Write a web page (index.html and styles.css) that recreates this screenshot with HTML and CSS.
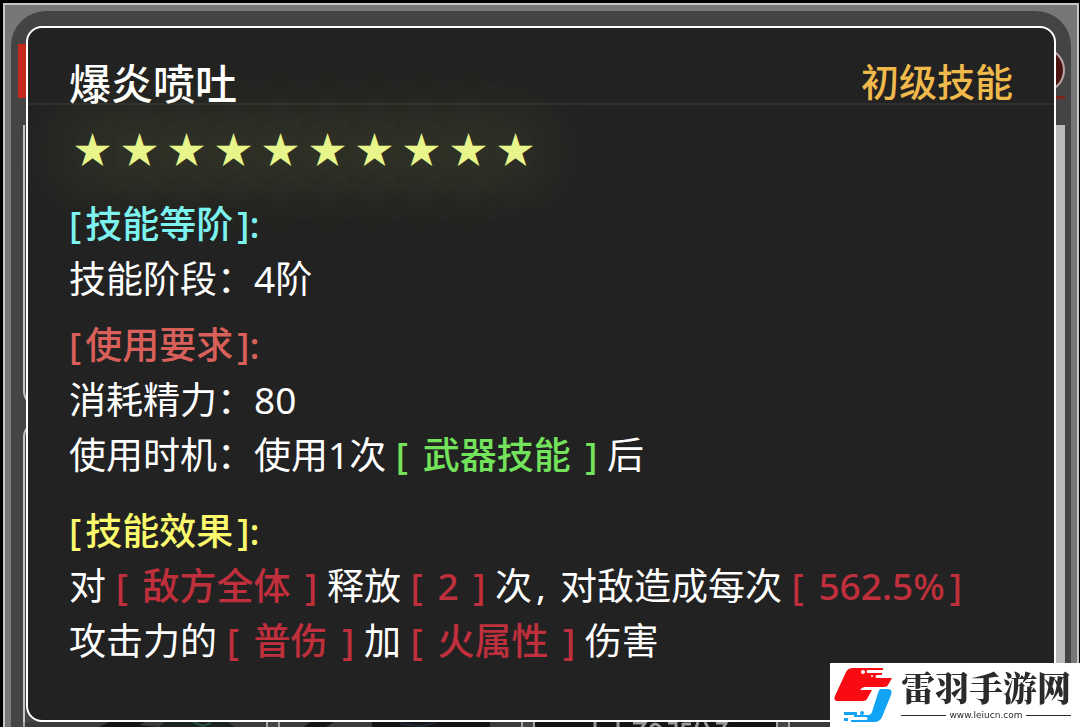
FILE: index.html
```html
<!DOCTYPE html>
<html lang="zh-CN">
<head>
  <meta charset="UTF-8">
  <title>爆炎喷吐</title>
  <link rel="stylesheet" href="styles.css">
</head>
<body>
  <div class="frame">
    <div class="panel">
      <div class="behind">
        <div class="red-tab"></div>
        <div class="close-dot"></div>
        <div class="red-line"></div>
        <div class="list-top"></div>
        <div class="list-bottom"></div>
        <div class="scroll"></div>
      </div>

      <main class="card">
        <header class="head">
          <h1>爆炎喷吐</h1>
          <span class="rank">初级技能</span>
        </header>

        <div class="body">
          <div class="stars">
            <span>★</span><span>★</span><span>★</span><span>★</span><span>★</span><span>★</span><span>★</span><span>★</span><span>★</span><span>★</span>
          </div>

          <section>
            <h2 class="cyan">[<b>技能等阶</b>]:</h2>
            <p>技能阶段：4阶</p>
          </section>

          <section>
            <h2 class="coral">[<b>使用要求</b>]:</h2>
            <p>消耗精力：80</p>
            <p>使用时机：使用1次 <span class="key green">[ <b>武器技能</b> ]</span> 后</p>
          </section>

          <section class="effect">
            <h2 class="yellow">[<b>技能效果</b>]:</h2>
            <p>对 <span class="key red">[ <b>敌方全体</b> ]</span> 释放 <span class="key red">[ <b>2</b> ]</span> 次<span class="comma">,</span>对敌造成每次 <span class="key red">[ <b>562.5%</b>]</span></p>
            <p>攻击力的 <span class="key red">[ <b>普伤</b> ]</span> 加 <span class="key red">[ <b>火属性</b> ]</span> 伤害</p>
          </section>
        </div>
      </main>

      <div class="tiles">
        <div class="tile">
          <svg width="241" height="40" viewBox="0 0 241 40">
            <path d="M84 0h36l-6 3 20 2h-60z" fill="#151515"/>
            <path d="M140 0h62l8 5h-76z" fill="#1b2322"/>
            <path d="M168 0l10 4 8-3" fill="none" stroke="#2b4f45" stroke-width="2"/>
          </svg>
        </div>
        <div class="tile">
          <svg width="241" height="40" viewBox="0 0 241 40">
            <path d="M30 0h24l-8 5h-22zM92 0h118v40H92z" fill="#151517"/>
            <path d="M120 2l20 2 16-3" fill="none" stroke="#1f2833" stroke-width="2"/>
          </svg>
        </div>
        <div class="tile dark">
          <svg width="241" height="40" viewBox="0 0 241 40">
            <g fill="none" stroke="#9a9a9a" stroke-width="3">
              <path d="M60 0v10M83 0v10M98 1h12l-6 9M116 9v-4q4-6 9 0v5M133 1h8v9M148 1v9M148 2h8M163 0l-3 9M170 0l4 8M181 1h10l-5 9"/>
            </g>
          </svg>
        </div>
        <div class="tile"></div>
      </div>
    </div>
  </div>

  <aside class="mark">
    <svg class="logo" width="60" height="56" viewBox="0 0 60 56">
      <path d="M19 1H49V3H34a1 1 0 0 0 0 3h14v2h-5a1 1 0 0 0 0 3H58l-4 7q-1 2-4 2H31q-3 0-5 3h12l-5 9q-1 2-4 2H4q-5 0-3-5L12 5q2-4 7-4z" fill="#f80b12"/>
      <circle cx="29" cy="5" r="2" fill="#fff"/>
      <circle cx="38" cy="9" r="1" fill="#fff"/>
      <path d="M47 22h7q5 0 3 6l-9 22q-2 5-8 5H17v-2h15a1 1 0 0 0 0-3H20v-2h14q3 0 4-3l6-19q1-4 3-4z" fill="#12a4f4"/>
      <path d="M10 45h13v3H10zM10 51h4v3h-4z" fill="#12a4f4"/>
      <circle cx="28" cy="46" r="2" fill="#12a4f4"/>
    </svg>
    <div class="mark-text">
      <strong>雷羽手游网</strong>
      <small>www.leiucn.com</small>
    </div>
  </aside>
</body>
</html>
```
FILE: styles.css
```css
* { box-sizing: border-box; }
body {
  margin: 0;
  height: 100vh;
  overflow: hidden;
  background: #000;
  color: #fff;
  font-family: "Noto Sans", "Noto Sans CJK SC", sans-serif;
  font-size: 37px;
  line-height: 55px;
}
h1, h2, p { margin: 0; }

.frame {
  margin: 3px 1px 0 3px;
  padding: 6px 6px 0;
  border: 2px solid #c6c6c6;
  border-bottom: 0;
  background: #777;
}
.panel {
  position: relative;
  padding: 15px 15px 0;
  border-radius: 35px 35px 0 0;
  background: #444;
}

/* game window that shows past the edges of the card */
.behind { position: absolute; inset: 0; }
.behind div { position: absolute; }
.red-tab { left: 7px; top: 33px; width: 20px; height: 54px; background: #c4291e; }
.close-dot {
  right: 6px; top: 36px; width: 46px; height: 46px;
  border: 2px solid #b9a5a5; border-radius: 50%; background: #4d1512;
}
.red-line { right: 6px; top: 85px; width: 20px; height: 3px; background: #7d241d; }
.list-top, .list-bottom { left: 12px; width: 40px; border: 2px solid #c6c6c6; }
.list-top { top: 114px; height: 282px; border-top: 0; border-radius: 0 0 16px 16px; }
.list-bottom { top: 410px; bottom: 0; border-bottom: 0; border-radius: 16px 0 0 0; }
.scroll { right: 6px; top: 114px; bottom: 0; width: 20px; background: #b9b9b9; }

.card {
  position: relative;
  padding-bottom: 52px;
  border: 2px solid #fff;
  border-radius: 16px;
  background: #222;
}
.head {
  display: flex;
  justify-content: space-between;
  padding: 32px 41px 0;
  border-bottom: 2px solid #2f2f2f;
}
h1 { padding-top: 5px; font-size: 42px; font-weight: 500; line-height: 38px; }
.rank { font-size: 38px; font-weight: 500; line-height: 42px; color: #f0b94b; }
.body { padding: 16px 41px 0; }

.stars {
  display: flex;
  gap: 10px;
  padding-left: 5px;
  margin-bottom: 20px;
  color: #e8f58c;
  font-family: "Noto Sans CJK SC", sans-serif;
  text-shadow: 0 0 70px rgba(232, 245, 110, 0.8);
}

section { margin-bottom: 11px; }
.effect { margin-top: 21px; margin-bottom: 0; }
h2 { font-size: 37px; font-weight: 500; }
h2 b { margin: 0 4px; font-weight: 500; }
.key, .key b { font-weight: 500; }
.key b { margin: 0 5px; }
.comma { margin: 0 14px 0 4px; }

.cyan { color: #7df3f0; }
.coral { color: #d9605a; }
.yellow { color: #fbf96c; }
.green { color: #74e35c; }
.red { color: #bf2f3c; }

.tiles {
  position: relative;
  display: grid;
  grid-template-columns: repeat(4, 1fr);
  gap: 10px;
  margin: 0 23px 0 -3px;
}
.tile {
  height: 40px;
  border: 2px solid #a5a5a5;
  border-width: 0 2px;
  background: #3a3a3a;
  overflow: hidden;
}
.tile.dark { background: #151515; }
.tile svg { display: block; }

.mark {
  position: fixed;
  right: 0;
  bottom: 0;
  display: flex;
  gap: 7px;
  padding: 4px 9px 4px 4px;
  background: #fff;
  color: #2b2b2b;
}
.mark-text { display: flex; flex-direction: column; }
.mark strong {
  font: 900 34px/40px "Noto Serif CJK SC", "Noto Sans CJK SC", serif;
}
.mark small {
  display: flex;
  align-items: center;
  gap: 3px;
  font: 9px/16px "DejaVu Sans", sans-serif;
}
.mark small::before, .mark small::after {
  content: "";
  flex: 1;
  height: 1px;
  background: #2b2b2b;
}
```
